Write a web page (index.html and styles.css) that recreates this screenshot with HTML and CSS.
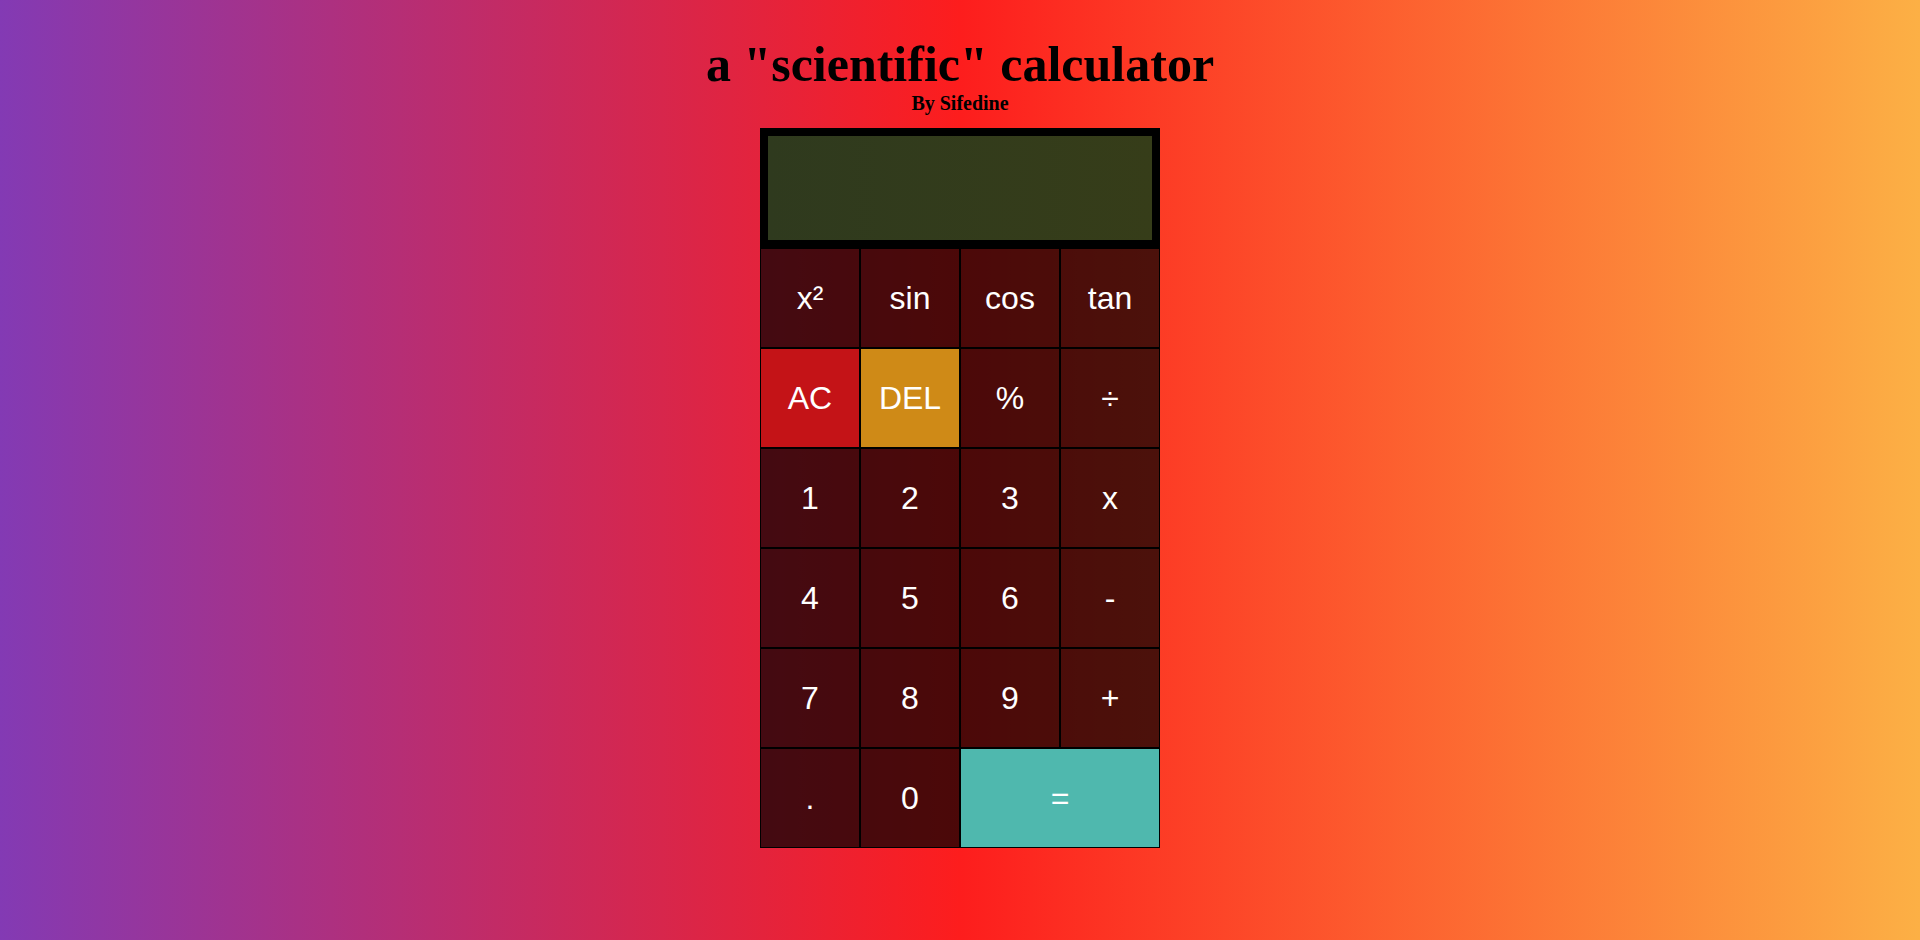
FILE: index.html
```html
<!DOCTYPE html>
<html lang="en">
<head>
<meta charset="utf-8">
<title>a "scientific" calculator</title>
<link rel="stylesheet" href="styles.css">
</head>
<body>
<main class="page">
  <h1 class="title">a "scientific" calculator</h1>
  <p class="byline">By Sifedine</p>
  <div class="calc">
    <div class="display"></div>
    <button class="key">x²</button>
    <button class="key">sin</button>
    <button class="key">cos</button>
    <button class="key">tan</button>
    <button class="key key-ac">AC</button>
    <button class="key key-del">DEL</button>
    <button class="key">%</button>
    <button class="key">÷</button>
    <button class="key">1</button>
    <button class="key">2</button>
    <button class="key">3</button>
    <button class="key">x</button>
    <button class="key">4</button>
    <button class="key">5</button>
    <button class="key">6</button>
    <button class="key">-</button>
    <button class="key">7</button>
    <button class="key">8</button>
    <button class="key">9</button>
    <button class="key">+</button>
    <button class="key">.</button>
    <button class="key">0</button>
    <button class="key key-eq">=</button>
  </div>
</main>
</body>
</html>
```
FILE: styles.css
```css
html, body {
  margin: 0;
  padding: 0;
}
body {
  min-height: 100vh;
  background: linear-gradient(90deg, #833ab4 0%, #fd1d1d 50%, #fcb045 100%);
  font-family: "Liberation Serif", "Times New Roman", serif;
  color: #000;
}
.page {
  display: flex;
  flex-direction: column;
  align-items: center;
  padding-top: 39px;
}
.title {
  margin: 0 0 4px;
  font-size: 50px;
  line-height: 50px;
  font-weight: bold;
}
.byline {
  margin: 0 0 15px;
  font-size: 20px;
  line-height: 20px;
  font-weight: bold;
}
.calc {
  display: grid;
  grid-template-columns: repeat(4, 100px);
  grid-template-rows: 120px repeat(6, 100px);
  width: 400px;
}
.display {
  grid-column: 1 / 5;
  box-sizing: border-box;
  border: 8px solid #000;
  background: linear-gradient(90deg, #2f3a1e, #363d19);
}
.key {
  box-sizing: border-box;
  margin: 0;
  padding: 0;
  border: 1px solid #000;
  background: rgba(0, 0, 0, 0.7);
  color: #fff;
  font-family: "Liberation Sans", Arial, sans-serif;
  font-size: 32px;
  cursor: pointer;
}
.key-ac {
  background: #c41317;
}
.key-del {
  background: #cf8a17;
}
.key-eq {
  grid-column: span 2;
  background: #4fb8ae;
}
```
